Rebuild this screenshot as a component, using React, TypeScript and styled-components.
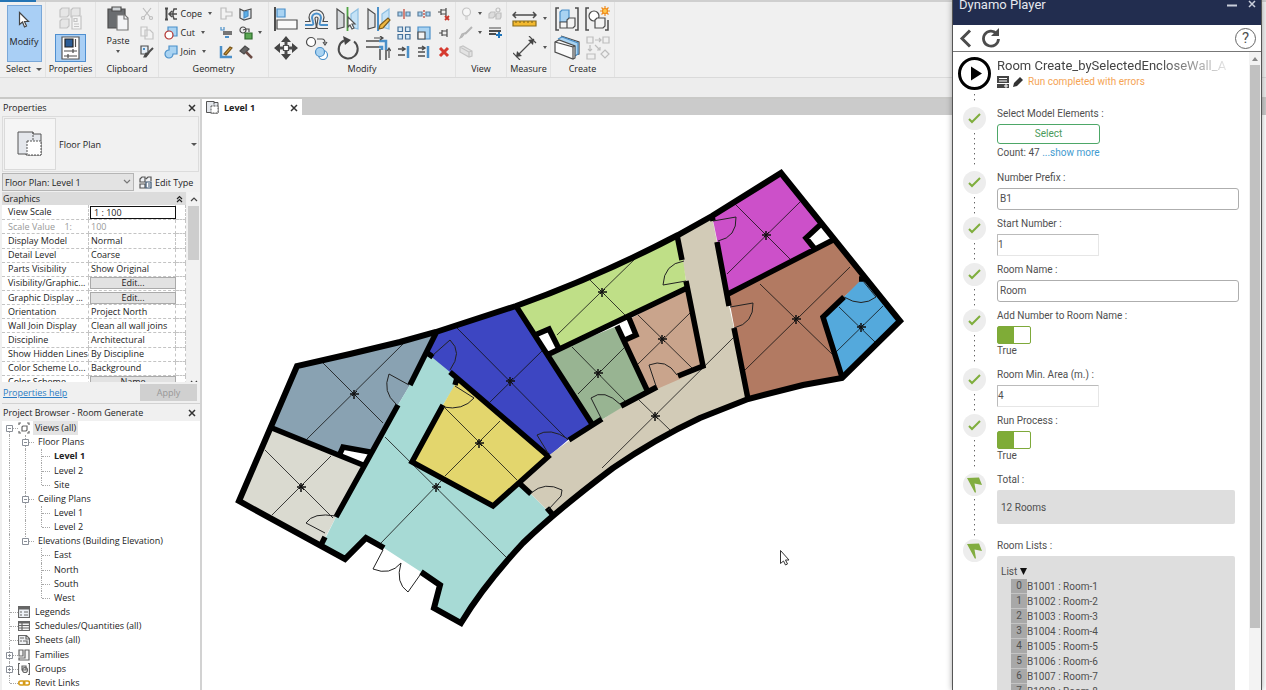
import React from "react";
import styled, { createGlobalStyle } from "styled-components";

const UI = '"Open Sans", "Noto Sans", sans-serif';
const PLAYER = 'Roboto, "Noto Sans", sans-serif';

const Global = createGlobalStyle`
  *, *::before, *::after { box-sizing: border-box; }
  body { margin: 0; background: #fff; font-family: ${UI}; font-size: 9px; color: #222; }
  button, input, select { font: inherit; color: inherit; margin: 0; padding: 0; }
  ul, ol, h1, h2, p { margin: 0; padding: 0; list-style: none; font-size: inherit; font-weight: inherit; }
`;

/* ---------- shell ---------- */
const Desktop = styled.div`
  position: relative;
  display: flex;
  flex-direction: column;
  height: 100vh;
  overflow: hidden;
`;
const TabStrip = styled.div`
  flex: none;
  height: 2px;
  background: linear-gradient(90deg, #2474b4 36px, #cfcfcf 36px);
`;
const Ribbon = styled.header`
  flex: none;
  display: flex;
  height: 76px;
  padding-left: 3px;
  background: #f0f0f0;
  border-bottom: 1px solid #dadada;
`;
const OptionsBar = styled.div`
  flex: none;
  height: 21px;
  background: #ededed;
  border-bottom: 2px solid #c9c9c7;
`;
const Work = styled.div`
  flex: 1;
  display: flex;
  min-height: 0;
`;

/* ---------- ribbon ---------- */
const Group = styled.section<{ $w: number }>`
  display: flex;
  flex-direction: column;
  width: ${(p) => p.$w}px;
  padding-top: 2px;
  border-right: 1px solid #e2e2e2;
`;
const GroupBody = styled.div`
  display: flex;
  justify-content: center;
  align-items: flex-start;
  height: 58px;
`;
const GroupName = styled.h2`
  line-height: 14px;
  text-align: center;
  white-space: nowrap;
`;
const Grid = styled.div<{ $cols: string; $row: number }>`
  display: grid;
  grid-template-columns: ${(p) => p.$cols};
  grid-auto-rows: ${(p) => p.$row}px;
`;
const Tool = styled.button`
  display: grid;
  place-items: center;
  border: 0;
  background: none;
`;
const WordTool = styled.button`
  display: flex;
  align-items: center;
  gap: 3px;
  border: 0;
  background: none;
  white-space: nowrap;
  i { margin-left: 3px; }
`;
const ModifyButton = styled.button`
  display: flex;
  flex-direction: column;
  align-items: center;
  justify-content: flex-start;
  gap: 6px;
  width: 35px;
  height: 57px;
  margin-top: 1px;
  padding-top: 5px;
  border: 1px solid #79a7d8;
  background: #a9cff5;
`;
const PasteButton = styled(ModifyButton)`
  width: 40px;
  gap: 3px;
  padding-top: 1px;
  border: 0;
  background: none;
`;
const PropertiesStack = styled.div`
  display: flex;
  flex-direction: column;
  align-items: center;
  gap: 3px;
  padding-top: 2px;
`;
const PropertiesButton = styled.button`
  display: grid;
  place-items: center;
  width: 31px;
  height: 28px;
  border: 1px solid #4f8fd0;
  background: #a9cff5;
`;
const Caret = styled.i`
  width: 0;
  height: 0;
  align-self: center;
  justify-self: center;
  border: 2px solid transparent;
  border-top: 3px solid #555;
  border-bottom: 0;
`;
const BigCaret = styled(Caret)`
  display: inline-block;
  margin-left: 5px;
  border-width: 3px;
  border-bottom-width: 0;
  vertical-align: middle;
`;

type DrawProps = { w: number; h: number; s?: string; children: React.ReactNode };
const Draw = ({ w, h, s = "#4c4c4c", children }: DrawProps) => (
  <svg width={w} height={h} viewBox={`0 0 ${w} ${h}`} fill="none" stroke={s} strokeWidth="1.2" aria-hidden="true">
    {children}
  </svg>
);

const BLUE = "#4b90c9";
const PALE = "#a9d3f2";

const IconArrow = () => (
  <Draw w={12} h={18} s="#444">
    <path d="M1.500 1.500v12l3-2.500 2 5 2-1-2-4.500h4z" fill="#fff" />
  </Draw>
);
const IconCubes = () => (
  <Draw w={26} h={25} s="#c3c3c3">
    <path d="M2 4l2-2h7v7l-2 2H2zM13 4l2-2h7v7l-2 2h-7zM2 15l2-2h7v7l-2 2H2z" fill="#e6e6e6" />
    <path d="M14 10h9v13h-9z" fill="#f4f4f4" />
    <path d="M16 12.500h3v3h-3zM16 18h5M16 20.500h5" />
  </Draw>
);
const IconSheet = () => (
  <Draw w={19} h={24}>
    <path d="M1 1h17v22H1z" fill="#fff" stroke="#555" />
    <path d="M4 3h8v8H4z" fill="#2c5d96" stroke="#222" />
    <path d="M14.500 3v8M3 15h13M12 13v4M3 20h13M7 18v4" />
  </Draw>
);
const IconPaste = () => (
  <Draw w={22} h={25}>
    <path d="M1 3h17v19H1z" fill="#6a6d70" />
    <path d="M5 1h9v4H5z" fill="#cfd3d6" />
    <path d="M10 9h8l3 3v12H10z" fill="#f3f4f6" stroke="#777" />
    <path d="M17 9v4h4" stroke="#777" />
  </Draw>
);
const IconCutX = () => (
  <Draw w={14} h={14} s="#bdbdbd">
    <path d="M3 1l7 9M11 1L4 10" />
    <circle cx="3" cy="11" r="1.500" />
    <circle cx="11" cy="11" r="1.500" />
  </Draw>
);
const IconCopy = () => (
  <Draw w={14} h={14} s="#c4c4c4">
    <path d="M1 1h6v9H1zM5 4h5l3 3v6H5z" fill="#f3f3f3" />
  </Draw>
);
const IconMatch = () => (
  <Draw w={14} h={14}>
    <path d="M1 1h7v8H1z" fill="#e6eef6" />
    <path d="M3 3h2v2H3z" fill={BLUE} stroke="none" />
    <path d="M13 3L8 8" strokeWidth="2" />
    <path d="M9 8l-3 4-2 0 2-4z" fill="#444" />
  </Draw>
);
const IconCope = () => (
  <Draw w={14} h={14}>
    <path d="M1 1.500h3M1 12.500h3M2.500 1.500v11" strokeWidth="2" />
    <path d="M13 2h-3L9 5v4l1 3h3M13 7H6M8 4L5 7l3 3" strokeWidth="1.500" />
  </Draw>
);
const IconCut = () => (
  <Draw w={14} h={14}>
    <path d="M4 1h9v9H4z" fill={PALE} stroke={BLUE} />
    <circle cx="5" cy="9" r="4" fill="#fff" stroke="#b2302c" />
  </Draw>
);
const IconJoin = () => (
  <Draw w={14} h={14} s={BLUE}>
    <path d="M5 1h8v8H9a4 4 0 1 1-4-4z" fill={PALE} />
  </Draw>
);
const IconCopeOff = () => (
  <Draw w={13} h={13} s="#bcbcbc">
    <path d="M1 1h5v4h6v4H6v3H1z" fill="#f2f2f2" />
  </Draw>
);
const IconFace = () => (
  <Draw w={13} h={14}>
    <path d="M1 2l4 2 7-2v9l-7 2-4-2z" fill="#dfe9f1" />
    <path d="M5 5l4-1v5l-4 2z" fill="#5bb0e8" stroke={BLUE} />
  </Draw>
);
const IconBeam = () => (
  <Draw w={13} h={13}>
    <path d="M1 1v3h3V1" stroke={BLUE} />
    <path d="M3 6h9M3 8h9" strokeWidth="1.500" />
    <path d="M5 11h4" stroke={BLUE} strokeWidth="2" />
  </Draw>
);
const IconPaint = () => (
  <Draw w={14} h={14}>
    <circle cx="4" cy="4" r="3" />
    <path d="M4 4l3-1h3v3" />
    <path d="M6 7h7v6H6z" fill="#5ba653" stroke="#2c6a2a" />
  </Draw>
);
const IconWallEdit = () => (
  <Draw w={14} h={14}>
    <path d="M2 1v11h11" stroke={BLUE} strokeWidth="2.500" />
    <path d="M5 9l6-7 2 1-6 7z" fill="#e2a63c" stroke="#7c5a20" />
  </Draw>
);
const IconHammer = () => (
  <Draw w={14} h={14}>
    <path d="M1 6l5-5 4 3-5 5z" fill="#666" />
    <path d="M7 7l6 6" stroke="#6b4b44" strokeWidth="2.500" />
  </Draw>
);
const IconAlign = () => (
  <Draw w={24} h={24}>
    <path d="M1 0v24" strokeWidth="2" />
    <path d="M3 2h8v8H3z" fill={PALE} stroke={BLUE} />
    <path d="M3 13h20v9H3z" fill="#fafafa" />
  </Draw>
);
const IconOffset = () => (
  <Draw w={25} h={22}>
    <path d="M1 17h7q2 0 1-3l-1-4a4.500 4.500 0 0 1 9 0l-1 4q-1 3 1 3h7" stroke={BLUE} strokeWidth="2" />
    <path d="M1 20.500h9q3 0 2-4l-1-6a1.500 1.500 0 0 1 3 0l-1 6q-1 4 2 4h9M1 13.500h5l-1-4a7.500 7.500 0 0 1 15 0l-1 4h5" />
  </Draw>
);
const IconMirrorAxis = () => (
  <Draw w={24} h={24}>
    <path d="M1 2l7 5v13l-7 2z" fill="#d6d9dc" />
    <path d="M11.500 0v24" stroke="#4fa342" strokeWidth="1.800" />
    <path d="M22 2l-7 5v13l7 2z" fill="#c4e2f6" stroke="#8dbfe2" />
    <path d="M12 10v10l2-2 2 4 2-1-2-4h3z" fill="#fff" stroke="#555" />
  </Draw>
);
const IconMirrorDraw = () => (
  <Draw w={24} h={24}>
    <path d="M1 2l7 5v13l-7 2z" fill="#e2e5e8" />
    <path d="M11 0v24" stroke={BLUE} strokeWidth="2" />
    <path d="M22 2l-7 5v13l7 2z" fill="#c4e2f6" stroke="#8dbfe2" />
    <path d="M12 22l1-4 8-7 2 2-7 8z" fill="#efb840" stroke="#7a5a1c" />
  </Draw>
);
const IconMove = () => (
  <Draw w={24} h={24}>
    <path d="M12 0l5 6H7zM12 24l5-6H7zM0 12l6-5v10zM24 12l-6-5v10z" fill="#444" stroke="none" />
    <path d="M12 5v4M12 15v4M5 12h4M15 12h4" strokeWidth="3" />
    <path d="M9.500 9.500h5v5h-5z" fill="#fff" />
  </Draw>
);
const IconCopyShape = () => (
  <Draw w={24} h={24}>
    <circle cx="6" cy="6" r="4.500" fill="#fff" />
    <circle cx="18" cy="19" r="4.500" fill="#fff" stroke={BLUE} />
    <circle cx="15" cy="16" r="4.500" fill={PALE} stroke={BLUE} />
    <path d="M12 3h5q3 0 3 4M18 6l2 3 2-3" />
  </Draw>
);
const IconRotate = () => (
  <Draw w={24} h={24}>
    <path d="M8 4.500a9.500 9.500 0 1 0 10 1" strokeWidth="2" />
    <path d="M7 0l8 4-6 5z" fill="#444" stroke="none" />
  </Draw>
);
const IconTrim = () => (
  <Draw w={25} h={24}>
    <path d="M0 5h13M0 11h13M14 13v11M20 13v11" strokeWidth="1.500" />
    <path d="M13 5h7v9M13 11h3v3" stroke={BLUE} strokeWidth="2.500" />
    <path d="M8 2h8M14 0l3 2-3 2M23 22v-9M21 15l2-3 2 3" />
  </Draw>
);
const IconSplit = ({ gap }: { gap?: boolean }) => (
  <Draw w={14} h={12}>
    <path d="M1 4h4v4H1zM9 4h4v4H9z" fill={PALE} stroke="#5c7f9b" />
    <path d={gap ? "M7 2v2M7 5v2M7 8v2" : "M7 1v10"} stroke="#c0392b" />
  </Draw>
);
const IconUnpin = () => (
  <Draw w={14} h={14}>
    <path d="M1 5h3M4 2v6M4 3h5v4H4M9 1v8" />
    <path d="M8 9l4 4M12 9l-4 4" stroke="#c8362b" strokeWidth="1.800" />
  </Draw>
);
const IconPin = () => (
  <Draw w={13} h={12}>
    <path d="M1 6h3M4 3v6M4 4h5v4H4M9 2v8" />
  </Draw>
);
const IconArray = () => (
  <Draw w={14} h={14}>
    <path d="M1 1h4.500v4.500H1zM8.500 1H13v4.500H8.500zM1 8.500h4.500V13H1zM8.500 8.500H13V13H8.500z" fill="#d7eaf8" stroke="#44719a" />
  </Draw>
);
const IconScale = () => (
  <Draw w={14} h={14}>
    <path d="M1 1h12v12H1z" fill={PALE} stroke={BLUE} />
    <path d="M1 6h7v7H1z" fill="#f3f3f3" />
  </Draw>
);
const IconExtend = ({ many }: { many?: boolean }) => (
  <Draw w={14} h={14}>
    <path d={many ? "M1 3h6M1 7h7M1 11h7M5 1l3 2-3 2" : "M1 4h6M5 2l3 2-3 2M1 10h7"} strokeWidth="1.500" />
    <path d="M11 1v12" stroke={BLUE} strokeWidth="2.500" />
  </Draw>
);
const IconDelete = () => (
  <Draw w={12} h={12}>
    <path d="M2 2l8 8M10 2l-8 8" stroke="#d63a2f" strokeWidth="3" />
  </Draw>
);
const IconBulb = () => (
  <Draw w={11} h={14} s="#c4c4c4">
    <circle cx="5.500" cy="5" r="4" fill="#f6f6f6" />
    <path d="M4 10h3M4 12h3" />
  </Draw>
);
const IconDisplace = () => (
  <Draw w={14} h={13} s="#c0c0c0">
    <path d="M1 7l2-2h4v4l-2 2H1zM8 8l1-2h4v4l-1 2H8z" fill="#dcdcdc" />
    <circle cx="10" cy="3" r="2" />
  </Draw>
);
const IconBrush = () => (
  <Draw w={14} h={13} s="#b5b5b5">
    <path d="M13 1L6 8" strokeWidth="2" />
    <path d="M6 7l-3 4-2 1 2-4z" fill="#c0c0c0" />
  </Draw>
);
const IconLinework = () => (
  <Draw w={14} h={13}>
    <path d="M1 2h12" strokeWidth="1" />
    <path d="M1 5h12M1 8h7" strokeWidth="2" />
    <path d="M11 6v6M8 9h6" stroke="#1e74bb" strokeWidth="2" />
  </Draw>
);
const IconBoxOff = () => (
  <Draw w={14} h={13} s="#c4c4c4">
    <path d="M1 2l3-1 9 5v5l-3 1-9-5zM1 2l9 5v5M10 7l3-1" fill="#e3e3e3" />
  </Draw>
);
const IconMeasure = () => (
  <Draw w={25} h={18}>
    <path d="M1 5h23M4 2L1 5l3 3M21 2l3 3-3 3" strokeWidth="1.500" />
    <path d="M1 11h23v5H1z" fill="#f3b92e" stroke="#8a6d1c" />
    <path d="M4 11v2M8 11v2M12 11v2M16 11v2M20 11v2" stroke="#8a6d1c" />
  </Draw>
);
const IconDimension = () => (
  <Draw w={24} h={24}>
    <path d="M3 21L21 3M0 17l7 7M16 0l7 7" />
    <path d="M3 21l1-6 5 5zM21 3l-6 1 5 5z" fill="#444" stroke="none" />
  </Draw>
);
const IconGroupMake = () => (
  <Draw w={24} h={24}>
    <path d="M4 1H1v22h3M20 1h3v22h-3" strokeWidth="1.500" />
    <path d="M5 5l2-2h7v10l-2 2H5z" fill={PALE} stroke={BLUE} />
    <path d="M12 13l2-2h6v8l-2 2h-6zM5 15h7v6H5z" fill="#f4f4f4" />
  </Draw>
);
const IconGroupStar = () => (
  <Draw w={26} h={25}>
    <path d="M4 2H1v22h3M20 24h3V14" strokeWidth="1.500" />
    <circle cx="9" cy="10" r="5" fill="#fff" />
    <path d="M10 14l2-2h8v8l-2 2h-8z" fill="#f4f4f4" />
    <path d="M20 0v10M15 5h10M16.500 1.500l7 7M23.500 1.500l-7 7" stroke="#ef8b1c" />
    <circle cx="20" cy="5" r="2.500" fill="#ffc94d" stroke="#ef8b1c" />
  </Draw>
);
const IconAssembly = () => (
  <Draw w={27} h={25}>
    <path d="M7 1l18 6v12l-4 1" fill="#f4f4f4" />
    <path d="M4 4l4-2 16 6v11l-3 2" fill={PALE} stroke={BLUE} />
    <path d="M1 7l4-2 16 6v12l-2 1L1 17z" fill="#fafafa" />
    <path d="M1 7l18 5v12M19 12l2-1" />
  </Draw>
);
const IconFamily = () => (
  <Draw w={24} h={24} s="#bdbdbd">
    <path d="M1 1h6v6H1zM17 1h6v6h-6zM1 18h8v5H1zM19 14l4 4-4 4-4-4zM9 4h6M13 2l2 2-2 2M4 9v6M2 13l2 2 2-2M9 9l5 5M11 14h3v-3" />
  </Draw>
);

/* ---------- side panels ---------- */
const Side = styled.aside`
  flex: none;
  display: flex;
  flex-direction: column;
  width: 202px;
  padding-left: 2px;
  background: #f0f0f0;
  border-right: 2px solid #d2d2d2;
`;
const PaneTitle = styled.header`
  flex: none;
  display: flex;
  align-items: center;
  justify-content: space-between;
  height: 17px;
  padding: 0 3px 0 1px;
`;
const CloseButton = styled.button`
  display: grid;
  place-items: center;
  width: 10px;
  height: 10px;
  border: 0;
  background: none;
`;
const IconClose = ({ c = "#333" }: { c?: string }) => (
  <Draw w={8} h={8} s={c}>
    <path d="M1 1l6 6M7 1L1 7" strokeWidth="1.500" />
  </Draw>
);
const TypeSelector = styled.button`
  flex: none;
  display: flex;
  align-items: center;
  gap: 3px;
  height: 56px;
  padding: 1px;
  border: 1px solid #dcdcdc;
  background: #f1f1f1;
  margin-right: 1px;
`;
const TypeThumb = styled.span`
  display: grid;
  place-items: center;
  width: 52px;
  height: 52px;
  border: 1px solid #dadada;
  background: #f5f5f5;
`;
const TypeName = styled.span`
  flex: 1;
  text-align: left;
`;
const InstanceRow = styled.div`
  flex: none;
  display: flex;
  align-items: center;
  gap: 5px;
  height: 20px;
`;
const SelectBox = styled.label`
  position: relative;
  display: block;
  width: 132px;
  svg { position: absolute; right: 3px; top: 6px; pointer-events: none; }
  select {
    display: block;
    width: 100%;
    height: 18px;
    padding: 0 2px;
    border: 1px solid #b5b5b5;
    border-radius: 0;
    background: #e3e3e3;
    appearance: none;
  }
`;
const EditType = styled.button`
  display: flex;
  align-items: center;
  gap: 3px;
  border: 0;
  background: none;
  white-space: nowrap;
`;
const PropsArea = styled.div`
  flex: none;
  display: grid;
  grid-template-columns: 1fr 13px;
  height: 190px;
  overflow: hidden;
`;
const Sheet = styled.table`
  align-self: start;
  height: 198px;
  width: 184px;
  table-layout: fixed;
  border-collapse: separate;
  border-spacing: 0;
  background: #fff;
  th, td {
    padding: 0 0 0 2px;
    border-bottom: 1px dashed #c4c4c4;
    border-right: 1px dashed #c4c4c4;
    font-weight: 400;
    line-height: 12px;
    text-align: left;
    white-space: pre;
  }
  th { padding-left: 6px; }
  td input, td button { display: block; width: 86px; height: 12px; margin-left: -1px; line-height: 10px; }
  td input { height: 13px; padding: 0 3px; border: 1px solid #111; background: #fff; }
  td button { border: 1px solid #aaa; background: #e2e2e2; }
`;
const Section = styled.tr`
  th { padding: 0 3px 0 1px; border: 0; background: #dcdcdc; }
`;
const SectionInner = styled.span`
  display: flex;
  justify-content: space-between;
  align-items: center;
`;
const Row = styled.tr<{ $dim?: boolean }>`
  color: ${(p) => (p.$dim ? "#999" : "inherit")};
`;
const Rail = styled.div`
  display: flex;
  flex-direction: column;
  align-items: center;
  min-height: 0;
  background: #f2f2f2;
  padding: 4px 0;
  svg { flex: none; }
`;
const RailThumb = styled.div`
  flex: none;
  width: 11px;
  height: 54px;
  margin: 4px 0 auto;
  background: #cdcdcd;
`;
const Footer = styled.div`
  flex: none;
  display: flex;
  justify-content: space-between;
  align-items: center;
  height: 22px;
  padding: 0 3px 1px 1px;
  border-bottom: 1px solid #d2d2d2;
  a { color: #2b7cc4; }
`;
const Apply = styled.button`
  width: 57px;
  height: 17px;
  border: 0;
  background: #d0d0d0;
  color: #979797;
`;
const Tree = styled.ul`
  flex: none;
  display: grid;
  grid-auto-rows: 1fr;
  height: 269px;
  background: #fff;
`;
const TreePane = styled.div`
  flex: 1;
  background: #fff;
  overflow: hidden;
`;
const Node = styled.li`
  display: flex;
  align-items: center;
  white-space: nowrap;
`;
type GuideKind = "line" | "tee" | "elbow" | "none" | "start";
const Guide = styled.span<{ $kind: GuideKind }>`
  position: relative;
  flex: none;
  width: 16px;
  height: 100%;
  &::before {
    content: "";
    position: absolute;
    left: 7px;
    top: ${(p) => (p.$kind === "start" ? "50%" : "0")};
    bottom: ${(p) => (p.$kind === "elbow" ? "50%" : "0")};
    border-left: ${(p) => (p.$kind === "none" ? "0" : "1px dotted #a8a8a8")};
  }
  &::after {
    content: "";
    position: absolute;
    left: 8px;
    right: 0;
    top: 50%;
    border-top: ${(p) => (p.$kind === "line" || p.$kind === "none" ? "0" : "1px dotted #a8a8a8")};
  }
`;
const Toggle = styled.button`
  position: absolute;
  z-index: 1;
  left: 4px;
  top: 4px;
  width: 7px;
  height: 7px;
  border: 0;
  background: #fff;
  svg { display: block; }
`;
const NodeText = styled.span<{ $bold?: boolean; $hot?: boolean; $icon?: boolean }>`
  margin-left: ${(p) => (p.$icon ? 3 : 2)}px;
  padding: 0 2px;
  line-height: 14px;
  font-weight: ${(p) => (p.$bold ? 700 : 400)};
  background: ${(p) => (p.$hot ? "#e4e4e4" : "none")};
`;

const Expander = ({ plus }: { plus?: boolean }) => (
  <Toggle aria-label={plus ? "Expand" : "Collapse"}>
    <svg width="7" height="7" viewBox="0 0 7 7" fill="none" stroke="#8a8f98">
      <path d={plus ? "M.5 .5h6v6h-6zM2 3.500h3M3.500 2v3" : "M.5 .5h6v6h-6zM2 3.500h3"} />
    </svg>
  </Toggle>
);

const TreeIcon = ({ name }: { name: string }) => (
  <Draw w={12} h={12} s="#666">
    {name === "views" && <path d="M3 1H1v2M9 1h2v2M3 11H1V9M9 11h2V9M4 5l1-1h4v4L8 9H4z" />}
    {name === "legends" && (
      <>
        <path d="M.5 .5h11v11H.5z" fill="#eef2f7" />
        <path d="M.5 2h11" strokeWidth="3" />
        <path d="M2 6h2M6 6h4M2 9h2M6 9h4" />
      </>
    )}
    {name === "schedules" && (
      <>
        <path d="M.5 1.500h11v9H.5zM.5 5.500h11M.5 8h11M4 3v8" fill="#f4f4f4" />
        <path d="M.5 2.500h11" strokeWidth="2" />
      </>
    )}
    {name === "sheets" && <path d="M.5 1.500h8l3 3v6H.5zM5 7h4v3M8 2v3h3M2 4h4M2 7h2" fill="#eef0f3" />}
    {name === "families" && <path d="M1 1h4v6H1zM7 1h4v10H1V9h6z" fill="#f4f4f4" />}
    {name === "groups" && (
      <>
        <path d="M2 .5H.5v11H2M10 .5h1.500v11H10" />
        <path d="M4 3h4v4H4z" fill="#ddd" />
        <circle cx="7" cy="7" r="2.500" />
      </>
    )}
    {name === "links" && (
      <>
        <rect x=".8" y="4" width="6" height="4" rx="2" stroke="#d59a16" strokeWidth="1.600" />
        <rect x="5.500" y="4" width="6" height="4" rx="2" stroke="#d59a16" strokeWidth="1.600" />
      </>
    )}
  </Draw>
);

type TreeItem = { t: string; g: GuideKind[]; box?: "plus" | "minus"; icon?: string; bold?: boolean; hot?: boolean };
const tree: TreeItem[] = [
  { t: "Views (all)", g: ["start"], box: "minus", icon: "views", hot: true },
  { t: "Floor Plans", g: ["line", "tee"], box: "minus" },
  { t: "Level 1", g: ["line", "line", "tee"], bold: true },
  { t: "Level 2", g: ["line", "line", "tee"] },
  { t: "Site", g: ["line", "line", "elbow"] },
  { t: "Ceiling Plans", g: ["line", "tee"], box: "minus" },
  { t: "Level 1", g: ["line", "line", "tee"] },
  { t: "Level 2", g: ["line", "line", "elbow"] },
  { t: "Elevations (Building Elevation)", g: ["line", "elbow"], box: "minus" },
  { t: "East", g: ["line", "none", "tee"] },
  { t: "North", g: ["line", "none", "tee"] },
  { t: "South", g: ["line", "none", "tee"] },
  { t: "West", g: ["line", "none", "elbow"] },
  { t: "Legends", g: ["tee"], icon: "legends" },
  { t: "Schedules/Quantities (all)", g: ["tee"], icon: "schedules" },
  { t: "Sheets (all)", g: ["tee"], icon: "sheets" },
  { t: "Families", g: ["tee"], box: "plus", icon: "families" },
  { t: "Groups", g: ["tee"], box: "plus", icon: "groups" },
  { t: "Revit Links", g: ["elbow"], icon: "links" },
];

const properties: { n: string; v: string; kind?: "input" | "button"; dim?: boolean }[] = [
  { n: "View Scale", v: "1 : 100", kind: "input" },
  { n: "Scale Value    1:", v: "100", dim: true },
  { n: "Display Model", v: "Normal" },
  { n: "Detail Level", v: "Coarse" },
  { n: "Parts Visibility", v: "Show Original" },
  { n: "Visibility/Graphic...", v: "Edit...", kind: "button" },
  { n: "Graphic Display ...", v: "Edit...", kind: "button" },
  { n: "Orientation", v: "Project North" },
  { n: "Wall Join Display", v: "Clean all wall joins" },
  { n: "Discipline", v: "Architectural" },
  { n: "Show Hidden Lines", v: "By Discipline" },
  { n: "Color Scheme Lo...", v: "Background" },
  { n: "Color Scheme", v: "Name", kind: "button" },
];

const PlanIcon = ({ w }: { w: number }) => (
  <svg width={w} height={w} viewBox="0 0 26 26" fill="none" stroke="#555" strokeWidth={w > 20 ? 1 : 2} aria-hidden="true">
    <path d="M1 1h15v2h8v21H9v-1H1z" fill="#e4e7ec" />
    <path d="M10 10h14v14H10z" fill="#fff" strokeDasharray="2 1" />
    <path d="M16 1v8" strokeDasharray="2 1" />
  </svg>
);

/* ---------- drawing area ---------- */
const Main = styled.main`
  flex: 1;
  display: flex;
  flex-direction: column;
  min-width: 0;
  overflow: hidden;
`;
const ViewTabs = styled.div`
  flex: none;
  display: flex;
  height: 16px;
  background: #cbcbcb;
`;
const ViewTab = styled.div`
  display: flex;
  align-items: center;
  gap: 5px;
  width: 100px;
  padding: 1px 3px 0 4px;
  background: #fff;
  font-weight: 700;
  span { flex: 1; }
`;
const Canvas = styled.div`
  flex: 1;
  overflow: hidden;
  background: #fff;
  svg { display: block; }
`;

const rooms: { c: string; p: string; at: [number, number]; x: string }[] = [
  { c: "#89a2b2", p: "297,366 350,354 400,341 436,331 410,385 398,405 363,465 273,428", at: [354, 394], x: "M323 363L383 423M403 344L307 439" },
  { c: "#dadad0", p: "273,428 363,465 336,517 325,538 321,546 239,501", at: [301, 487], x: "M265 450L333 518M331 456L272 515" },
  { c: "#a7dad5", p: "428,354 452,372 456,384 443,405 412,462 493,506 518,482 531,494 552,515 523,543 503,563 483,590 461,623 434,608 440,585 421,572 384,548 366,538 345,559 322,545 336,517 398,405", at: [436, 487], x: "M385 437L507 558M443 479L381 543" },
  { c: "#3d46c2", p: "436,331 516,306 592,423 568,440 548,457 455,380 450,372 428,354", at: [510, 381], x: "M457 328L568 440M542 351L490 402" },
  { c: "#e3d66d", p: "457,381 548,456 493,506 412,462 443,405", at: [479, 443], x: "M445 408L517 480M500 421L445 476" },
  { c: "#d2cbb7", p: "678,235 712,216 717,242 729,306 734,328 748,399 700,418 667,437 613,468 552,515 531,494 518,482 548,456 570,440 602,420 622,406 657,387 678,377 703,366 687,285 682,260", at: [655, 416], x: "M639 400L671 431M733 338L602 468" },
  { c: "#bfdf87", p: "516,306 600,271 640,252 678,235 683,260 687,288 547,355", at: [602, 292], x: "M588 278L625 315M637 257L557 335" },
  { c: "#98b492", p: "547,355 617,326 647,390 624,406 603,419 592,423", at: [598, 373], x: "M572 347L627 403M624 348L578 394" },
  { c: "#c9a48c", p: "617,326 687,288 703,366 680,379 657,389 647,390", at: [662, 339], x: "M638 315L692 368M690 313L638 364" },
  { c: "#cc50c9", p: "712,216 781,173 833,240 728,294 714,225", at: [766, 235], x: "M735 204L790 259M800 202L727 274" },
  { c: "#b27a62", p: "728,294 833,240 863,278 862,281 844,297 823,317 842,377 803,385 748,399", at: [796, 319], x: "M760 284L832 354M850 267L745 370" },
  { c: "#54a9dc", p: "863,278 900,321 842,378 823,317 844,297", at: [861, 327], x: "M839 307L875 342M883 306L836 352" },
];

const outerWalls =
  "M421 572L440 585L434 608L461 623Q484 585 523 543Q556 511 613 468Q655 439 700 418L748 399L803 385L842 378L900 321L781 173L712 216L678 235Q600 276 516 306L436 332L400 342L350 354L297 366L239 501L345 559L366 538L384 548";
const innerWalls =
  "M436 333L410 385M426 352L433 357M398 405L336 517M325 537L321 545M272 428L363 465M339 456L343 447L370 452" +
  "M450 372L548 456M457 378L455 385M443 405L412 462L493 506L550 455M518 482L531 494M547 508L553 515" +
  "M516 306L592 424M569 440L602 419M547 355L687 288M535 335L549 329L560 351M629 318L636 335L625 340" +
  "M617 326L647 390M621 406L657 387M678 376L703 366L686 281M677 235L682 260" +
  "M712 216L713 221M717 242L729 306M734 328L748 399M728 294L833 240M820 225L806 238L814 248" +
  "M844 297L823 317L842 377M859 279L865 279";
const shafts = "M339 456L343 447L370 452L363 465ZM535 335L549 329L561 351L547 355ZM617 326L629 319L636 335L625 340ZM821 224L806 238L814 248L832 240Z";
const doors =
  "M409 385L389 374Q382 392 396 404M433 355L450 340Q463 352 450 370M455 386L474 398Q463 411 443 407" +
  "M548 453L537 435Q550 427 568 439M325 533L306 523Q313 512 336 516M383 550L373 569Q390 576 401 563Q395 583 408 592L420 575" +
  "M531 493Q545 481 562 490L561 496L548 510M684 261Q664 264 663 285L686 281M601 418L591 398Q604 388 621 405" +
  "M656 386L649 365Q666 358 677 375M713 221L736 217Q737 237 718 241M730 307L753 303Q754 323 734 328M863 281L876 297Q862 308 844 297";

const FloorPlan = () => (
  <svg width="750" height="575" viewBox="202 115 750 575" role="img" aria-label="Level 1 floor plan">
    {rooms.map((r) => (
      <polygon key={r.c} points={r.p} fill={r.c} />
    ))}
    {rooms.map((r) => (
      <g key={r.c} stroke="#111">
        <path d={r.x} strokeWidth="0.800" />
        <path
          d={`M${r.at[0] - 4} ${r.at[1]}h9M${r.at[0]} ${r.at[1] - 4}v9`}
          strokeWidth="1.500"
        />
        <path d={`M${r.at[0] - 2} ${r.at[1] - 2}l5 5M${r.at[0] + 3} ${r.at[1] - 3}l-5 5`} strokeWidth="1" />
      </g>
    ))}
    <path d={shafts} fill="#fff" />
    <path d={innerWalls} fill="none" stroke="#000" strokeWidth="5.500" />
    <path d={outerWalls} fill="none" stroke="#000" strokeWidth="6" />
    <path d={doors} fill="none" stroke="#222" strokeWidth="1" />
    <path d="M780.500 550.500v13l3-2.500 2 4 2-1-2-4h3.500z" fill="#fff" stroke="#333" />
  </svg>
);

/* ---------- player window ---------- */
const Player = styled.section`
  position: absolute;
  top: 0;
  right: 4px;
  bottom: 0;
  display: flex;
  flex-direction: column;
  width: 310px;
  overflow: hidden;
  background: #fff;
  border: solid #555;
  border-width: 0 1px;
  box-shadow: 0 0 6px rgba(0, 0, 0, 0.35);
  font-family: ${PLAYER};
  font-size: 10px;
  color: #4f4f4f;
`;
const PlayerTitle = styled.header`
  flex: none;
  display: flex;
  align-items: flex-start;
  gap: 11px;
  height: 25px;
  padding: 0 5px 0 6px;
  background: #222d4f;
  color: #e6e8ee;
  h1 { flex: 1; font-size: 13px; line-height: 10px; }
`;
const PlayerBar = styled.div`
  flex: none;
  display: flex;
  align-items: center;
  gap: 9px;
  height: 27px;
  padding: 0 5px 0 6px;
  border-bottom: 1px solid #777;
`;
const Plain = styled.button`
  display: grid;
  place-items: center;
  border: 0;
  background: none;
`;
const Spacer = styled.span`
  flex: 1;
`;
const Help = styled.button`
  width: 21px;
  height: 21px;
  border: 1px solid #666;
  border-radius: 50%;
  background: #fff;
  font-size: 15px;
  line-height: 18px;
`;
const PlayerBody = styled.div`
  flex: 1;
  display: flex;
  min-height: 0;
`;
const Script = styled.div`
  flex: 1;
  min-width: 0;
  padding-left: 5px;
  overflow: hidden;
`;
const ScriptHead = styled.div`
  display: grid;
  grid-template-columns: 33px 1fr;
  column-gap: 6px;
  height: 54px;
  padding: 5px 14px 0 0;
`;
const ScriptTitle = styled.h2`
  overflow: hidden;
  white-space: nowrap;
  font-size: 13px;
  line-height: 18px;
  color: #444;
  mask-image: linear-gradient(90deg, #000 160px, transparent 240px);
`;
const Status = styled.p`
  display: flex;
  align-items: center;
  gap: 4px;
  line-height: 14px;
  color: #f5a455;
`;
const Step = styled.div<{ $pad: number }>`
  display: grid;
  grid-template-columns: 33px 1fr;
  column-gap: 6px;
  padding-right: 10px;
  > div:last-child { padding-bottom: ${(p) => p.$pad}px; }
`;
const Track = styled.div`
  display: flex;
  flex-direction: column;
  align-items: center;
  padding-top: 1px;
`;
const Badge = styled.span`
  display: grid;
  place-items: center;
  width: 23px;
  height: 23px;
  border-radius: 50%;
  background: #ededed;
`;
const Dots = styled.span`
  flex: 1;
  width: 1px;
  margin: 3px 0 2px;
  background: linear-gradient(#666 1px, #c4c4c4 1px, #c4c4c4 2px, transparent 2px) 0 0 / 1px 5px repeat-y;
`;
const HeadDots = styled(Dots)`
  flex: none;
  height: 8px;
  margin: 4px auto 0;
`;
const Label = styled.label`
  display: block;
  margin-bottom: 2px;
  line-height: 16px;
`;
const TextBox = styled.input<{ $short?: boolean }>`
  display: block;
  width: ${(p) => (p.$short ? "102px" : "100%")};
  height: 22px;
  padding: 0 2px 2px ${(p) => (p.$short ? 0 : 2)}px;
  border: 1px solid #aeaeae;
  border-color: ${(p) => (p.$short ? "#bbb #e6e6e6 #e6e6e6 #bbb" : "#aeaeae")};
  border-radius: ${(p) => (p.$short ? 1 : 3)}px;
  background: #fff;
`;
const SelectButton = styled.button`
  display: block;
  width: 103px;
  height: 20px;
  border: 1px solid #4da767;
  border-radius: 3px;
  background: #fff;
  color: #4a9a5b;
  line-height: 16px;
`;
const Count = styled.p`
  margin-top: 1px;
  line-height: 16px;
  a { color: #3f9bd0; text-decoration: none; }
`;
const Switch = styled.input`
  display: block;
  appearance: none;
  width: 34px;
  height: 18px;
  margin: 0;
  border: 1px solid #7ea93a;
  border-radius: 2px;
  background: linear-gradient(90deg, #7fac37 16px, #fff 16px);
`;
const SwitchState = styled.p`
  line-height: 14px;
`;
const Output = styled.output`
  display: flex;
  align-items: center;
  height: 34px;
  margin-right: 4px;
  padding: 0 4px;
  border-radius: 2px;
  background: #dedede;
`;
const ListOutput = styled.div`
  margin-right: 4px;
  padding: 8px 4px;
  border-radius: 2px;
  background: #dedede;
`;
const ListToggle = styled.button`
  display: flex;
  align-items: center;
  gap: 3px;
  border: 0;
  background: none;
  line-height: 15px;
  svg { display: block; }
`;
const ListRow = styled.li`
  display: flex;
  margin-left: 10px;
  line-height: 15px;
  span {
    width: 16px;
    border-bottom: 1px solid #c4c4c4;
    background: #a8a8a8;
    text-align: center;
    line-height: 14px;
  }
`;
const Scroll = styled.div`
  flex: none;
  width: 12px;
  padding-top: 5px;
  background: #f3f3f3;
  svg { display: block; margin: 0 auto; }
`;
const ScrollThumb = styled.div`
  width: 10px;
  height: 89%;
  margin: 4px auto 0;
  background: #c1c1c1;
`;

const Check = () => (
  <Badge>
    <svg width="13" height="11" viewBox="0 0 13 11" fill="none" stroke="#7fae3d" strokeWidth="2">
      <path d="M1 6l3 3 8-8" />
    </svg>
  </Badge>
);
const Flag = () => (
  <Badge>
    <svg width="17" height="17" viewBox="0 0 17 17">
      <path d="M1 2l12-.5 3 7.500-7.500-1.500 1.500 9h-1.200z" fill="#82ad41" />
    </svg>
  </Badge>
);

type FieldProps = { id: string; label: string; pad: number; flag?: boolean; last?: boolean; children: React.ReactNode };
const Field = ({ id, label, pad, flag, last, children }: FieldProps) => (
  <Step $pad={pad}>
    <Track>
      {flag ? <Flag /> : <Check />}
      {!last && <Dots />}
    </Track>
    <div>
      <Label htmlFor={id}>{label} :</Label>
      {children}
    </div>
  </Step>
);

const RibbonGroup = ({ name, w, children }: { name: React.ReactNode; w: number; children: React.ReactNode }) => (
  <Group $w={w}>
    <GroupBody>{children}</GroupBody>
    <GroupName>{name}</GroupName>
  </Group>
);
const T = ({ n, children }: { n: string; children: React.ReactNode }) => <Tool aria-label={n}>{children}</Tool>;

export default function App() {
  return (
    <Desktop>
      <Global />
      <TabStrip />
      <Ribbon>
        <RibbonGroup name={<>Select<BigCaret /></>} w={43}>
          <ModifyButton><IconArrow />Modify</ModifyButton>
        </RibbonGroup>
        <RibbonGroup name="Properties" w={50}>
          <PropertiesStack>
            <T n="Type properties"><IconCubes /></T>
            <PropertiesButton aria-label="Properties"><IconSheet /></PropertiesButton>
          </PropertiesStack>
        </RibbonGroup>
        <RibbonGroup name="Clipboard" w={63}>
          <PasteButton><IconPaste />Paste<Caret /></PasteButton>
          <Grid $cols="18px" $row={19}>
            <T n="Cut to clipboard"><IconCutX /></T>
            <T n="Copy to clipboard"><IconCopy /></T>
            <T n="Match type"><IconMatch /></T>
          </Grid>
        </RibbonGroup>
        <RibbonGroup name="Geometry" w={110}>
          <Grid $cols="53px 19px 20px 8px" $row={19}>
            <WordTool><IconCope />Cope <Caret /></WordTool>
            <T n="Remove coping"><IconCopeOff /></T>
            <T n="Split face"><IconFace /></T>
            <span />
            <WordTool><IconCut />Cut <Caret /></WordTool>
            <T n="Beam joins"><IconBeam /></T>
            <T n="Paint"><IconPaint /></T>
            <Caret />
            <WordTool><IconJoin />Join <Caret /></WordTool>
            <T n="Wall joins"><IconWallEdit /></T>
            <T n="Demolish"><IconHammer /></T>
          </Grid>
        </RibbonGroup>
        <RibbonGroup name="Modify" w={187}>
          <Grid $cols="31px 31px 31px 31px" $row={29}>
            <T n="Align"><IconAlign /></T>
            <T n="Offset"><IconOffset /></T>
            <T n="Mirror pick axis"><IconMirrorAxis /></T>
            <T n="Mirror draw axis"><IconMirrorDraw /></T>
            <T n="Move"><IconMove /></T>
            <T n="Copy"><IconCopyShape /></T>
            <T n="Rotate"><IconRotate /></T>
            <T n="Trim corner"><IconTrim /></T>
          </Grid>
          <Grid $cols="20px 20px 20px" $row={19}>
            <T n="Split element"><IconSplit /></T>
            <T n="Split with gap"><IconSplit gap /></T>
            <T n="Unpin"><IconUnpin /></T>
            <T n="Array"><IconArray /></T>
            <T n="Scale"><IconScale /></T>
            <T n="Pin"><IconPin /></T>
            <T n="Extend single"><IconExtend /></T>
            <T n="Extend multiple"><IconExtend many /></T>
            <T n="Delete"><IconDelete /></T>
          </Grid>
        </RibbonGroup>
        <RibbonGroup name="View" w={51}>
          <Grid $cols="20px 8px 22px" $row={19}>
            <T n="Hide"><IconBulb /></T><Caret /><T n="Displace"><IconDisplace /></T>
            <T n="Override"><IconBrush /></T><Caret /><T n="Linework"><IconLinework /></T>
            <T n="Selection box"><IconBoxOff /></T>
          </Grid>
        </RibbonGroup>
        <RibbonGroup name="Measure" w={44}>
          <Grid $cols="32px 8px" $row={29}>
            <T n="Measure"><IconMeasure /></T><Caret />
            <T n="Dimension"><IconDimension /></T><Caret />
          </Grid>
        </RibbonGroup>
        <RibbonGroup name="Create" w={64}>
          <Grid $cols="31px 31px" $row={29}>
            <T n="Create group"><IconGroupMake /></T>
            <T n="Create similar"><IconGroupStar /></T>
            <T n="Create assembly"><IconAssembly /></T>
            <T n="Create parts"><IconFamily /></T>
          </Grid>
        </RibbonGroup>
      </Ribbon>
      <OptionsBar />

      <Work>
        <Side>
          <PaneTitle>
            <h2>Properties</h2>
            <CloseButton aria-label="Close properties"><IconClose /></CloseButton>
          </PaneTitle>
          <TypeSelector>
            <TypeThumb><PlanIcon w={26} /></TypeThumb>
            <TypeName>Floor Plan</TypeName>
            <BigCaret />
          </TypeSelector>
          <InstanceRow>
            <SelectBox>
              <select aria-label="View instance" defaultValue="Floor Plan: Level 1">
                <option>Floor Plan: Level 1</option>
              </select>
              <Draw w={8} h={6} s="#777"><path d="M1 1l3 3 3-3" /></Draw>
            </SelectBox>
            <EditType>
              <Draw w={13} h={13} s="#555">
                <path d="M1 3l2-2h3v5H1zM7 3l2-2h3v4M1 8h5v4H1z" fill="#eef1f5" />
                <path d="M7 6h5v6H7zM9 8h2M9 10h2" fill="#fff" stroke="#35506e" />
              </Draw>
              Edit Type
            </EditType>
          </InstanceRow>
          <PropsArea>
            <Sheet>
              <colgroup><col style={{ width: 87 }} /><col /><col style={{ width: 10 }} /></colgroup>
              <tbody>
                <Section>
                  <th colSpan={3} scope="colgroup">
                    <SectionInner>
                      Graphics
                      <Draw w={7} h={8} s="#222"><path d="M1 4l2.500-2.500L6 4M1 7l2.500-2.500L6 7" /></Draw>
                    </SectionInner>
                  </th>
                </Section>
                {properties.map((r) => (
                  <Row key={r.n} $dim={r.dim}>
                    <th scope="row">{r.n}</th>
                    <td>
                      {r.kind === "input" && <input aria-label={r.n} defaultValue={r.v} />}
                      {r.kind === "button" && <button>{r.v}</button>}
                      {!r.kind && r.v}
                    </td>
                    <td />
                  </Row>
                ))}
              </tbody>
            </Sheet>
            <Rail>
              <Draw w={8} h={6} s="#444"><path d="M1 5l3-3 3 3" /></Draw>
              <RailThumb />
              <Draw w={8} h={6} s="#444"><path d="M1 1l3 3 3-3" /></Draw>
            </Rail>
          </PropsArea>
          <Footer>
            <a href="#help">Properties help</a>
            <Apply disabled>Apply</Apply>
          </Footer>
          <PaneTitle>
            <h2>Project Browser - Room Generate</h2>
            <CloseButton aria-label="Close project browser"><IconClose /></CloseButton>
          </PaneTitle>
          <TreePane>
            <Tree>
              {tree.map((n, i) => (
                <Node key={i}>
                  {n.g.map((k, j) => (
                    <Guide key={j} $kind={k}>
                      {n.box && j === n.g.length - 1 && <Expander plus={n.box === "plus"} />}
                    </Guide>
                  ))}
                  {n.icon && <TreeIcon name={n.icon} />}
                  <NodeText $bold={n.bold} $hot={n.hot} $icon={!!n.icon}>{n.t}</NodeText>
                </Node>
              ))}
            </Tree>
          </TreePane>
        </Side>

        <Main>
          <ViewTabs>
            <ViewTab>
              <PlanIcon w={13} />
              <span>Level 1</span>
              <CloseButton aria-label="Close view"><IconClose /></CloseButton>
            </ViewTab>
          </ViewTabs>
          <Canvas><FloorPlan /></Canvas>
        </Main>
      </Work>

      <Player>
        <PlayerTitle>
          <h1>Dynamo Player</h1>
          <Plain aria-label="Minimize"><Draw w={10} h={8} s="#c9cedb"><path d="M0 5.500h10" strokeWidth="2" /></Draw></Plain>
          <Plain aria-label="Close"><IconClose c="#c9cedb" /></Plain>
        </PlayerTitle>
        <PlayerBar>
          <Plain aria-label="Back">
            <Draw w={13} h={19}><path d="M11 1.500L3 9.500l8 8" strokeWidth="3" /></Draw>
          </Plain>
          <Plain aria-label="Refresh">
            <Draw w={20} h={20}>
              <path d="M15.500 5.500A7.500 7.500 0 1 0 17.500 11" strokeWidth="2.800" />
              <path d="M18 0v8h-8z" fill="#4c4c4c" stroke="none" />
            </Draw>
          </Plain>
          <Spacer />
          <Help aria-label="Help">?</Help>
        </PlayerBar>
        <PlayerBody>
          <Script>
            <ScriptHead>
              <div>
                <Plain aria-label="Run">
                  <Draw w={33} h={33} s="#000">
                    <circle cx="16.500" cy="16.500" r="15" strokeWidth="3" />
                    <path d="M13 9.500l11 7-11 7z" fill="#000" stroke="none" />
                  </Draw>
                </Plain>
                <HeadDots as="div" />
              </div>
              <div>
                <ScriptTitle>Room Create_bySelectedEncloseWall_A</ScriptTitle>
                <Status>
                  <Draw w={12} h={12}>
                    <path d="M0 0h12v7H0zM0 8h12v4H0z" fill="#444" stroke="none" />
                    <path d="M2 2.500h8M2 5h8M7 10h4M9 8v4" stroke="#fff" strokeWidth="1" />
                  </Draw>
                  <Draw w={11} h={12}>
                    <path d="M0 11l1-4 6-6 3 3-6 6z" fill="#333" stroke="none" />
                  </Draw>
                  Run completed with errors
                </Status>
              </div>
            </ScriptHead>
            <Field id="elements" label="Select Model Elements" pad={9}>
              <SelectButton id="elements">Select</SelectButton>
              <Count>Count: 47 <a href="#more">...show more</a></Count>
            </Field>
            <Field id="prefix" label="Number Prefix" pad={6}><TextBox id="prefix" defaultValue="B1" /></Field>
            <Field id="start" label="Start Number" pad={6}><TextBox id="start" $short defaultValue="1" /></Field>
            <Field id="room" label="Room Name" pad={6}><TextBox id="room" defaultValue="Room" /></Field>
            <Field id="addnum" label="Add Number to Room Name" pad={9}>
              <Switch id="addnum" type="checkbox" defaultChecked />
              <SwitchState>True</SwitchState>
            </Field>
            <Field id="area" label="Room Min. Area (m.)" pad={6}><TextBox id="area" $short defaultValue="4" /></Field>
            <Field id="run" label="Run Process" pad={9}>
              <Switch id="run" type="checkbox" defaultChecked />
              <SwitchState>True</SwitchState>
            </Field>
            <Field id="total" label="Total" pad={14} flag><Output id="total">12 Rooms</Output></Field>
            <Field id="list" label="Room Lists" pad={14} flag last>
              <ListOutput>
                <ListToggle id="list">
                  List
                  <svg width="7" height="7" viewBox="0 0 7 7"><path d="M0 0h7L3.500 7z" fill="#111" /></svg>
                </ListToggle>
                <ol>
                  {Array.from({ length: 12 }, (_, i) => (
                    <ListRow key={i}>
                      <span>{i}</span>
                      {`B1${String(i + 1).padStart(3, "0")} : Room-${i + 1}`}
                    </ListRow>
                  ))}
                </ol>
              </ListOutput>
            </Field>
          </Script>
          <Scroll>
            <svg width="6" height="4" viewBox="0 0 6 4"><path d="M0 4l3-4 3 4z" fill="#888" /></svg>
            <ScrollThumb />
          </Scroll>
        </PlayerBody>
      </Player>
    </Desktop>
  );
}
